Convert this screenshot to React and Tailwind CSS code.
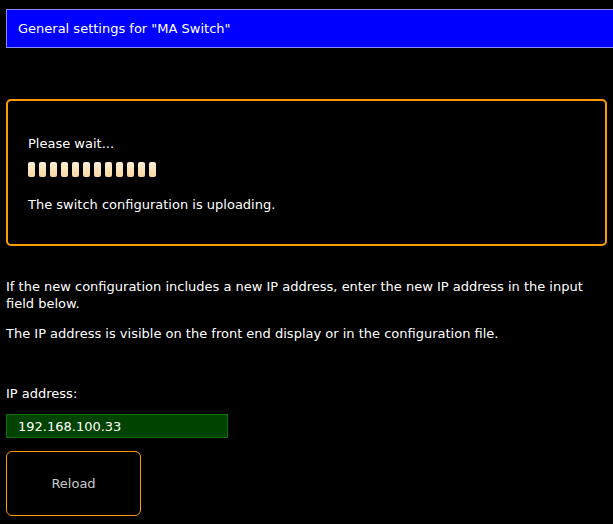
export default function App() {
  const pills = Array.from({ length: 12 });

  return (
    <div
      className="min-h-[524px] bg-black text-white text-[13px] leading-[17px] pt-[9px]"
      style={{ fontFamily: '"DejaVu Sans", Tahoma, sans-serif' }}
    >
      <div className="ml-[6px] -mr-[2px] h-[39px] flex items-center pl-[11px] bg-[#0000ff] border border-[#8a8aff]">
        General settings for "MA Switch"
      </div>

      <div className="mx-[6px] mt-[51px] h-[147px] border-2 border-[#ff9a00] rounded-[5px] px-[20px] pt-[34px]">
        <p>Please wait...</p>
        <div className="flex gap-[4px] mt-[10px]">
          {pills.map((_, i) => (
            <div
              key={i}
              className="w-[7px] h-[15px] rounded-[2px] bg-gradient-to-b from-[#fff0da] via-[#fde2bb] to-[#fcd7a2]"
            />
          ))}
        </div>
        <p className="mt-[19px]">The switch configuration is uploading.</p>
      </div>

      <div className="px-[6px] mt-[32px]">
        <p>
          If the new configuration includes a new IP address, enter the new IP
          address in the input field below.
        </p>
        <p className="mt-[13px]">
          The IP address is visible on the front end display or in the
          configuration file.
        </p>

        <p className="mt-[43px]">IP address:</p>
        <input
          type="text"
          defaultValue="192.168.100.33"
          className="block mt-[12px] w-[222px] h-[24px] bg-[#004200] border border-[#0c6e0c] pl-[11px] text-white outline-none"
          style={{ fontFamily: "inherit", fontSize: "13px" }}
        />
        <button className="mt-[13px] w-[135px] h-[65px] border border-[#ff9a00] rounded-[6px] text-[#c8c8c8]">
          Reload
        </button>
      </div>
    </div>
  );
}
